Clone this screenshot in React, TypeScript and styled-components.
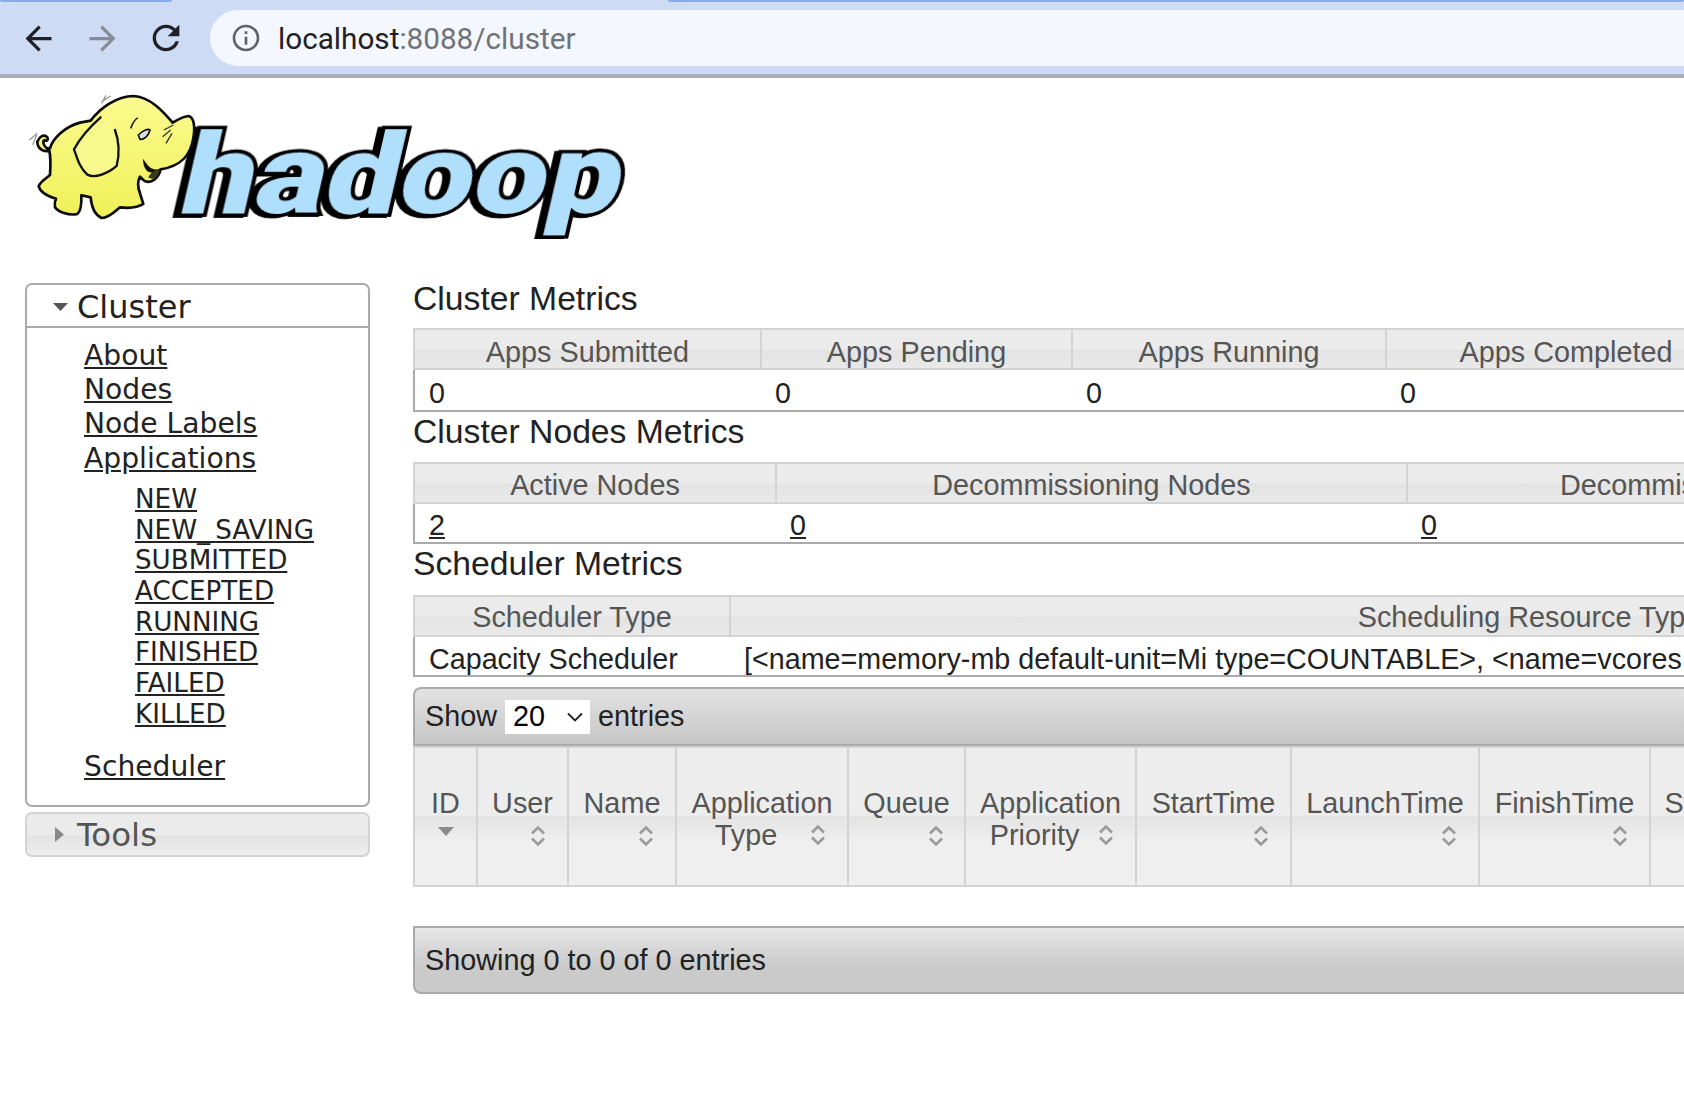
import React from "react";
import styled, { createGlobalStyle } from "styled-components";

const GlobalStyle = createGlobalStyle`
  html, body {
    margin: 0;
    padding: 0;
    background: #fff;
    overflow: hidden;
  }
  body {
    width: 1684px;
    height: 1104px;
    font-family: "Liberation Sans", Arial, sans-serif;
    color: #222;
  }
`;

const Page = styled.div`
  width: 1684px;
  height: 1104px;
  overflow: hidden;
`;

const BrowserBar = styled.header`
  height: 78px;
  box-sizing: border-box;
  background: #cddbf4;
  border-bottom: 4px solid #a9adb4;
  position: relative;
  display: flex;
  align-items: flex-start;
  gap: 24px;
  padding: 10px 0 0 18px;
`;

const TabEdge = styled.div<{ $left: number; $width: number }>`
  position: absolute;
  top: 0;
  left: ${(p) => p.$left}px;
  width: ${(p) => p.$width}px;
  height: 2px;
  background: #8aabe8;
  border-radius: 0 0 4px 4px;
`;

const NavButton = styled.button<{ $dim?: boolean }>`
  width: 40px;
  height: 56px;
  border: 0;
  padding: 0;
  background: none;
  display: flex;
  align-items: center;
  justify-content: center;
  color: ${(p) => (p.$dim ? "#868b96" : "#1f2126")};
`;

const AddressBar = styled.div`
  flex: 1;
  height: 56px;
  background: #f4f7fd;
  border-radius: 28px 0 0 28px;
  display: flex;
  align-items: center;
  padding-left: 20px;
  gap: 16px;
  color: #5f6368;
`;

const UrlText = styled.div`
  font-family: Roboto, "Liberation Sans", sans-serif;
  font-size: 29.7px;
  color: #1f2126;
`;

const UrlRest = styled.span`
  color: #6f7379;
`;

const LogoRow = styled.div`
  height: 185px;
  padding: 15px 0 0 27px;
  box-sizing: border-box;
`;

const Layout = styled.div`
  display: flex;
  align-items: flex-start;
  padding-left: 25px;
`;

const Sidebar = styled.nav`
  width: 345px;
  flex: none;
  margin-top: 20px;
  margin-right: 43px;
  font-family: "DejaVu Sans", Verdana, sans-serif;
`;

const Panel = styled.div`
  border: 2px solid #aaa;
  border-radius: 7px;
  height: 524px;
  box-sizing: border-box;
`;

const PanelTitle = styled.div`
  height: 39px;
  border-bottom: 2px solid #aaa;
  display: flex;
  align-items: center;
  padding: 2px 0 0 26px;
  gap: 9px;
  font-size: 32px;
  color: #222;
`;

const NavList = styled.div`
  padding: 11px 0 0 57px;
  display: flex;
  flex-direction: column;
  align-items: flex-start;
`;

const NavLink = styled.a<{ $gap?: number }>`
  font-size: 28.2px;
  line-height: 34.2px;
  color: #222;
  text-decoration: underline;
  margin-top: ${(p) => p.$gap ?? 0}px;
`;

const SubList = styled.div`
  padding: 8px 0 0 51px;
  display: flex;
  flex-direction: column;
  align-items: flex-start;
`;

const SubLink = styled.a`
  font-size: 26.2px;
  line-height: 30.7px;
  color: #222;
  text-decoration: underline;
`;

const WideBar = styled.span`
  letter-spacing: 5px;
`;

const ClosedPanel = styled.div`
  margin-top: 5px;
  height: 45px;
  box-sizing: border-box;
  border: 2px solid #d3d3d3;
  border-radius: 7px;
  display: flex;
  align-items: center;
  padding-left: 28px;
  gap: 13px;
  font-size: 32.5px;
  color: #555;
  background: linear-gradient(#ebebeb 0%, #ebebeb 50%, #e3e3e3 52%, #ededed 100%);
`;

const Main = styled.main`
  flex: none;
  width: 2400px;
`;

const Heading = styled.h3<{ $height: number; $line: number }>`
  margin: 0;
  height: ${(p) => p.$height}px;
  line-height: ${(p) => p.$line}px;
  font-size: 33.7px;
  font-weight: 400;
  color: #222;
`;

const MetricsGrid = styled.div<{ $cols: string }>`
  display: grid;
  grid-template-columns: ${(p) => p.$cols};
`;

const HeadCell = styled.div<{ $drop: number }>`
  height: 42px;
  box-sizing: border-box;
  border: 2px solid #d3d3d3;
  border-left-width: 0;
  padding-top: ${(p) => p.$drop}px;
  display: flex;
  align-items: center;
  justify-content: center;
  font-size: 28.8px;
  color: #555;
  background: linear-gradient(#ebebeb 0%, #ebebeb 50%, #e3e3e3 54%, #e9e9e9 100%);
  &:first-child {
    border-left-width: 2px;
  }
`;

const ValueCell = styled.div<{ $height: number; $drop: number; $first: boolean }>`
  height: ${(p) => p.$height}px;
  box-sizing: border-box;
  border-bottom: 2px solid #aaa;
  border-left: ${(p) => (p.$first ? "2px solid #aaa" : "0")};
  padding: ${(p) => p.$drop}px 0 0 ${(p) => (p.$first ? 14 : 13)}px;
  font-size: 28.7px;
  line-height: 38px;
  color: #222;
  white-space: nowrap;
  overflow: hidden;
`;

const ValueLink = styled.a`
  color: #222;
  text-decoration: underline;
`;

const Toolbar = styled.div<{ $footer?: boolean }>`
  box-sizing: border-box;
  height: ${(p) => (p.$footer ? 68 : 59)}px;
  margin-top: ${(p) => (p.$footer ? 39 : 10)}px;
  border: 2px solid #aaa;
  border-right-width: 0;
  border-radius: ${(p) => (p.$footer ? "0 0 0 8px" : "8px 0 0 0")};
  background: ${(p) =>
    p.$footer
      ? "linear-gradient(#e6e6e6 0%, #cacaca 60%, #c9c9c9 100%)"
      : "linear-gradient(#e2e2e2 0%, #c6c6c6 100%)"};
  display: flex;
  align-items: center;
  padding-left: 10px;
  font-size: 28.8px;
  color: #222;
`;

const PageSelect = styled.div`
  margin: 0 8px;
  width: 85px;
  height: 34px;
  background: #fff;
  color: #000;
  display: flex;
  align-items: center;
  justify-content: space-between;
  padding: 0 6px 0 8px;
  box-sizing: border-box;
`;

const AppsTable = styled.div`
  display: grid;
  grid-template-columns: 65px 91px 108px 172px 117px 171px 155px 188px 171px 96px 200px;
  height: 141px;
`;

const AppsHead = styled.div`
  box-sizing: border-box;
  border: 2px solid #d3d3d3;
  border-left-width: 0;
  padding: 39px 8px 0;
  position: relative;
  font-size: 28.8px;
  line-height: 32px;
  color: #555;
  text-align: center;
  background: linear-gradient(#ededed 0%, #ededed 49%, #e3e3e3 50%, #efefef 68%, #efefef 100%);
  &:first-child {
    border-left-width: 2px;
  }
`;

const HeadLabel = styled.div`
  white-space: nowrap;
`;

const WrappedLine = styled.span`
  display: block;
  padding-right: 32px;
`;

const SortSlot = styled.span<{ $right: number; $top: number }>`
  position: absolute;
  right: ${(p) => p.$right}px;
  top: ${(p) => p.$top}px;
  display: block;
  line-height: 0;
`;

const SortBoth = () => (
  <svg width="16" height="22" viewBox="0 0 16 22" fill="none" stroke="#9a9a9a" strokeWidth="2.6">
    <path d="M2 8.5 L8 2.5 L14 8.5" />
    <path d="M2 13.5 L8 19.5 L14 13.5" />
  </svg>
);

const SortDown = () => (
  <svg width="16" height="9" viewBox="0 0 16 9">
    <path d="M0 0 H16 L8 9 Z" fill="#8a8a8a" />
  </svg>
);

const HadoopLogo = () => (
  <svg width="600" height="146" viewBox="0 0 600 146">
    <defs>
      <linearGradient id="hide" x1="0" y1="0" x2="0" y2="1">
        <stop offset="0" stopColor="#fbfb90" />
        <stop offset="1" stopColor="#eff058" />
      </linearGradient>
    </defs>
    <g transform="translate(-27 -93)">
      <g transform="translate(176 213) skewX(-13)">
        <text
          x="0"
          y="0"
          textLength="440"
          lengthAdjust="spacingAndGlyphs"
          fontFamily="Roboto, Inter, sans-serif"
          fontWeight="900"
          fontSize="112"
          fill="#b0dffb"
          stroke="#000"
          strokeWidth="7"
          strokeLinejoin="miter"
          paintOrder="stroke"
          style={{ filter: "drop-shadow(-4px 1px 0 #000)" }}
        >
          hadoop
        </text>
      </g>
      {/* elephant, traced at 3x around (0,80) */}
      <g transform="translate(0 80) scale(0.3333)">
        <path
          d="M112 185 C118 170 132 160 142 172 C146 180 138 186 134 180 C128 182 128 195 140 205 L150 205 C158 175 195 140 240 128 L272 122 C300 85 350 48 400 48 C450 50 490 95 518 128 C535 118 552 108 566 108 C582 112 586 140 580 175 C572 225 545 258 482 268 C476 295 455 310 436 304 C428 300 424 294 420 290 C412 305 412 320 420 340 L430 372 C410 385 385 385 360 382 C345 395 325 415 305 414 C285 405 275 385 272 352 C262 350 252 348 244 346 C245 370 244 392 232 402 C205 408 175 395 165 382 C163 370 165 362 168 356 C148 350 120 340 116 318 C125 300 140 295 150 285 C152 255 152 230 148 212 C130 218 112 205 112 185 Z"
          fill="url(#hide)"
          stroke="#0c0c0c"
          strokeWidth="8"
          strokeLinejoin="round"
        />
        <path
          d="M302 112 C270 140 240 175 222 208 C232 235 238 262 262 284 C285 296 325 280 350 258 C358 225 358 185 345 150"
          fill="#f8f98c"
          stroke="#111"
          strokeWidth="7"
          strokeLinecap="round"
        />
        <path d="M392 145 C400 125 408 115 414 114" fill="none" stroke="#222" strokeWidth="5" />
        <path d="M415 165 C430 150 445 145 450 150 C445 170 430 180 420 178 Z" fill="#ddd" stroke="#111" strokeWidth="5" />
        <path d="M492 150 L520 135 M488 170 L512 150 M498 190 L516 160" stroke="#333" strokeWidth="4" />
        <path d="M432 245 C435 275 455 285 482 268 C470 275 452 270 442 258 Z" fill="#111" stroke="#111" strokeWidth="5" />
        <path d="M445 292 C450 280 465 270 478 268 C476 290 462 304 445 292 Z" fill="#3a3a1a" />
        <path d="M305 65 L332 48 M305 70 L318 46 M88 180 L112 160 M98 195 L110 165" stroke="#999" strokeWidth="4" />
      </g>
    </g>
  </svg>
);

type MetricsProps = {
  cols: string;
  heads: string[];
  values: React.ReactNode[];
  headDrop: number;
  valueDrop: number;
  valueHeight: number;
};

const Metrics = ({ cols, heads, values, headDrop, valueDrop, valueHeight }: MetricsProps) => (
  <MetricsGrid $cols={cols}>
    {heads.map((h, i) => (
      <HeadCell key={i} $drop={headDrop}>
        {h}
      </HeadCell>
    ))}
    {values.map((v, i) => (
      <ValueCell key={i} $height={valueHeight} $drop={valueDrop} $first={i === 0}>
        {v}
      </ValueCell>
    ))}
  </MetricsGrid>
);

const states: React.ReactNode[] = [
  "NEW",
  <>NEW<WideBar>_</WideBar>SAVING</>,
  "SUBMITTED",
  "ACCEPTED",
  "RUNNING",
  "FINISHED",
  "FAILED",
  "KILLED",
];

const appCols: { label: React.ReactNode; right: number; top: number }[] = [
  { label: "ID", right: 22, top: 78 },
  { label: "User", right: 21, top: 77 },
  { label: "Name", right: 21, top: 77 },
  { label: <>Application<WrappedLine>Type</WrappedLine></>, right: 21, top: 76 },
  { label: "Queue", right: 20, top: 77 },
  { label: <>Application<WrappedLine>Priority</WrappedLine></>, right: 21, top: 76 },
  { label: "StartTime", right: 21, top: 77 },
  { label: "LaunchTime", right: 21, top: 77 },
  { label: "FinishTime", right: 21, top: 77 },
  { label: "State", right: 21, top: 77 },
  { label: "FinalStatus", right: 21, top: 77 },
];

export default function App() {
  return (
    <Page>
      <GlobalStyle />
      <BrowserBar>
        <TabEdge $left={0} $width={172} />
        <TabEdge $left={668} $width={1016} />
        <NavButton>
          <svg width="39" height="39" viewBox="0 0 24 24" fill="currentColor">
            <path d="M20 11H7.83l5.59-5.59L12 4l-8 8 8 8 1.41-1.41L7.83 13H20v-2z" />
          </svg>
        </NavButton>
        <NavButton $dim>
          <svg width="39" height="39" viewBox="0 0 24 24" fill="currentColor">
            <path d="M12 4l-1.41 1.41L16.17 11H4v2h12.17l-5.58 5.59L12 20l8-8z" />
          </svg>
        </NavButton>
        <NavButton>
          <svg width="40" height="40" viewBox="0 0 24 24" fill="currentColor">
            <path d="M17.65 6.35C16.2 4.9 14.21 4 12 4c-4.42 0-7.99 3.58-7.99 8s3.57 8 7.99 8c3.73 0 6.84-2.55 7.73-6h-2.08c-.82 2.33-3.04 4-5.65 4-3.31 0-6-2.69-6-6s2.69-6 6-6c1.66 0 3.14.69 4.22 1.78L13 11h7V4l-2.35 2.35z" />
          </svg>
        </NavButton>
        <AddressBar>
          <svg width="32" height="32" viewBox="0 0 24 24" fill="currentColor">
            <path d="M11 7h2v2h-2zm0 4h2v6h-2zm1-9C6.48 2 2 6.48 2 12s4.48 10 10 10 10-4.48 10-10S17.52 2 12 2zm0 18c-4.41 0-8-3.59-8-8s3.59-8 8-8 8 3.59 8 8-3.59 8-8 8z" />
          </svg>
          <UrlText>
            localhost<UrlRest>:8088/cluster</UrlRest>
          </UrlText>
        </AddressBar>
      </BrowserBar>
      <LogoRow>
        <HadoopLogo />
      </LogoRow>
      <Layout>
        <Sidebar>
          <Panel>
            <PanelTitle>
              <svg width="15" height="8" viewBox="0 0 15 8">
                <path d="M0 0 H15 L7.5 8 Z" fill="#555" />
              </svg>
              Cluster
            </PanelTitle>
            <NavList>
              <NavLink>About</NavLink>
              <NavLink>Nodes</NavLink>
              <NavLink>Node Labels</NavLink>
              <NavLink>Applications</NavLink>
              <SubList>
                {states.map((s, i) => (
                  <SubLink key={i}>{s}</SubLink>
                ))}
              </SubList>
              <NavLink $gap={21}>Scheduler</NavLink>
            </NavList>
          </Panel>
          <ClosedPanel>
            <svg width="9" height="15" viewBox="0 0 9 15">
              <path d="M0 0 V15 L9 7.5 Z" fill="#888" />
            </svg>
            Tools
          </ClosedPanel>
        </Sidebar>
        <Main>
          <Heading $height={65} $line={70}>Cluster Metrics</Heading>
          <Metrics
            cols="349px 311px 314px 360px 1000px"
            heads={["Apps Submitted", "Apps Pending", "Apps Running", "Apps Completed", ""]}
            values={["0", "0", "0", "0", ""]}
            headDrop={7}
            valueDrop={4}
            valueHeight={42}
          />
          <Heading $height={50} $line={39}>Cluster Nodes Metrics</Heading>
          <Metrics
            cols="364px 631px 618px 800px"
            heads={["Active Nodes", "Decommissioning Nodes", "Decommissioned Nodes", ""]}
            values={[
              <ValueLink>2</ValueLink>,
              <ValueLink>0</ValueLink>,
              <ValueLink>0</ValueLink>,
              "",
            ]}
            headDrop={5}
            valueDrop={2}
            valueHeight={40}
          />
          <Heading $height={51} $line={39}>Scheduler Metrics</Heading>
          <Metrics
            cols="318px 1599px 500px"
            heads={["Scheduler Type", "Scheduling Resource Type", ""]}
            values={[
              "Capacity Scheduler",
              "[<name=memory-mb default-unit=Mi type=COUNTABLE>, <name=vcores default-unit= type=COUNTABLE>]",
              "",
            ]}
            headDrop={3}
            valueDrop={3}
            valueHeight={40}
          />
          <Toolbar>
            Show
            <PageSelect>
              20
              <svg width="18" height="10" viewBox="0 0 18 10" fill="none" stroke="#222" strokeWidth="1.8">
                <path d="M2 1.5 L9 8.5 L16 1.5" />
              </svg>
            </PageSelect>
            entries
          </Toolbar>
          <AppsTable>
            {appCols.map((c, i) => (
              <AppsHead key={i}>
                <HeadLabel>{c.label}</HeadLabel>
                <SortSlot $right={c.right} $top={c.top}>
                  {i === 0 ? <SortDown /> : <SortBoth />}
                </SortSlot>
              </AppsHead>
            ))}
          </AppsTable>
          <Toolbar $footer>Showing 0 to 0 of 0 entries</Toolbar>
        </Main>
      </Layout>
    </Page>
  );
}
